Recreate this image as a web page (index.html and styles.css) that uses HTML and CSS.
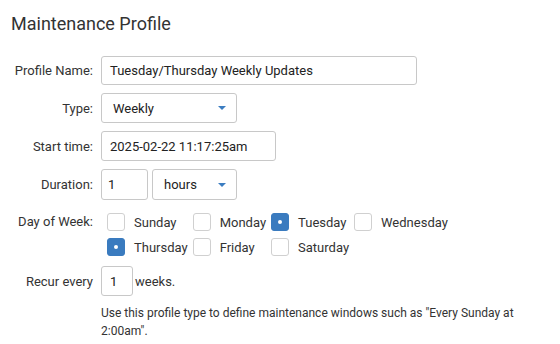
FILE: index.html
```html
<!DOCTYPE html>
<html>
<head>
<meta charset="utf-8">
<link rel="stylesheet" href="styles.css">
</head>
<body>
<div class="page">
  <h1 class="title">Maintenance Profile</h1>
  <div class="form">
    <div class="lbl">Profile Name:</div>
    <div class="field"><div class="ctl name">Tuesday/Thursday Weekly Updates</div></div>

    <div class="lbl">Type:</div>
    <div class="field"><div class="ctl sel type"><span>Weekly</span><i class="caret"></i></div></div>

    <div class="lbl">Start time:</div>
    <div class="field"><div class="ctl start">2025-02-22 11:17:25am</div></div>

    <div class="lbl">Duration:</div>
    <div class="field"><div class="ctl num">1</div><div class="ctl sel unit"><span>hours</span><i class="caret"></i></div></div>

    <div class="lbl lbl-top">Day of Week:</div>
    <div class="days">
      <div class="day"><span class="box"></span>Sunday</div>
      <div class="day"><span class="box"></span>Monday</div>
      <div class="day"><span class="box on"></span>Tuesday</div>
      <div class="day"><span class="box"></span>Wednesday</div>
      <div class="day"><span class="box on"></span>Thursday</div>
      <div class="day"><span class="box"></span>Friday</div>
      <div class="day"><span class="box"></span>Saturday</div>
    </div>

    <div class="lbl">Recur every</div>
    <div class="field"><div class="ctl recur">1</div><span class="weeks">weeks.</span></div>

    <div></div>
    <p class="help">Use this profile type to define maintenance windows such as "Every Sunday at 2:00am".</p>
  </div>
</div>
</body>
</html>
```
FILE: styles.css
```css
* { box-sizing: border-box; }
body {
  margin: 0;
  background: #fff;
  font-family: Roboto, "Liberation Sans", Arial, sans-serif;
  color: #333;
}
.page {
  padding: 12px 0 0 11px;
}
.title {
  margin: 0;
  font-size: 18px;
  font-weight: 400;
  line-height: 24px;
  color: #333;
}
.form {
  margin-top: 20px;
  display: grid;
  grid-template-columns: 82px 1fr;
  column-gap: 8px;
  row-gap: 8px;
  align-items: center;
}
.lbl {
  font-size: 13px;
  text-align: right;
  white-space: nowrap;
  color: #333;
}
.lbl-top {
  align-self: start;
  padding-top: 6px;
}
.field {
  display: flex;
  align-items: center;
  gap: 4px;
}
.ctl {
  height: 30px;
  border: 1px solid #c8c8c8;
  border-radius: 3px;
  background: #fff;
  font-size: 13px;
  color: #222;
  display: flex;
  align-items: center;
  padding: 0 8px;
  white-space: nowrap;
}
.name { width: 316px; height: 29px; }
.start { width: 175px; }
.type { width: 136px; }
.num { width: 47px; padding-left: 6px; height: 31px; }
.unit { width: 85px; height: 31px; }
.sel {
  justify-content: space-between;
  padding: 0 10px 0 11px;
}
.caret {
  width: 0;
  height: 0;
  border-left: 4px solid transparent;
  border-right: 4px solid transparent;
  border-top: 4px solid #3b7dc1;
}
.days {
  margin: 5px 0 2px 6px;
  display: grid;
  grid-template-columns: repeat(4, max-content);
  column-gap: 5px;
  row-gap: 7px;
}
.day {
  display: flex;
  align-items: center;
  gap: 9px;
  font-size: 13px;
  height: 18px;
  color: #333;
}
.box {
  width: 18px;
  height: 18px;
  border: 1px solid #d0d0d0;
  border-radius: 3px;
  background: #fff;
  position: relative;
}
.box.on {
  background: #3a7bbf;
  border-color: #3a7bbf;
}
.box.on::after {
  content: "";
  position: absolute;
  left: 6px;
  top: 6px;
  width: 4px;
  height: 4px;
  border-radius: 50%;
  background: #fff;
}
.recur { width: 32px; height: 30px; padding-left: 8px; }
.weeks {
  font-size: 13px;
  margin-left: -2px;
  color: #333;
}
.help {
  margin: 0;
  font-size: 12px;
  line-height: 18px;
  color: #333;
  padding-right: 20px;
}
```
